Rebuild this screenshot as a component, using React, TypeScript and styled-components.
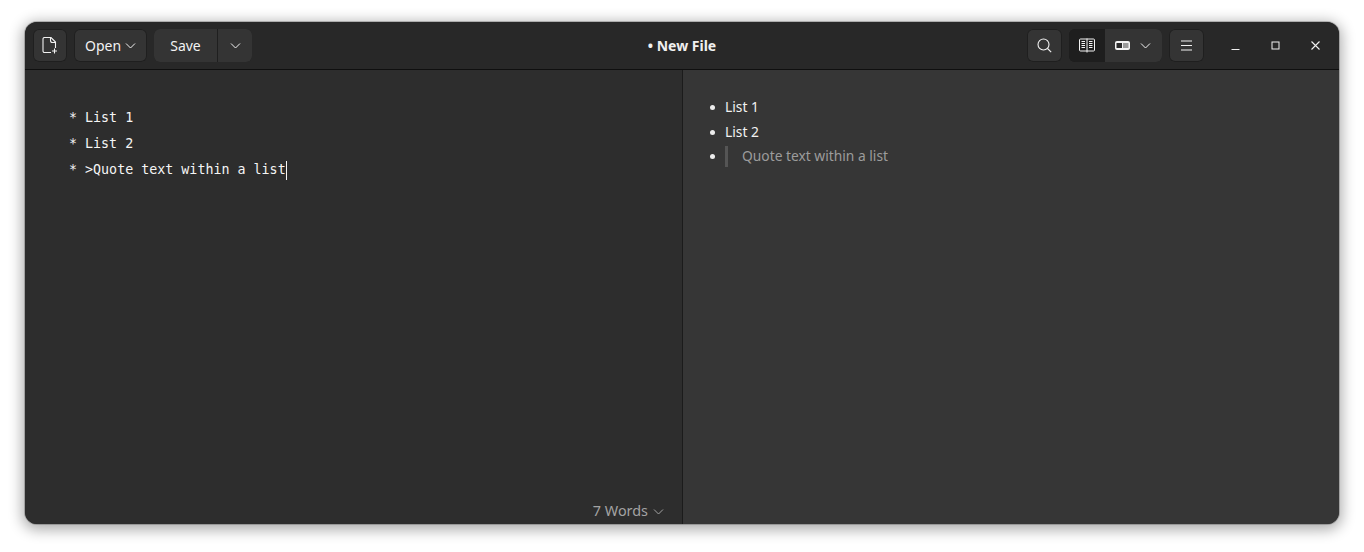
import styled, { createGlobalStyle } from 'styled-components';

const GlobalStyle = createGlobalStyle`
  html, body {
    margin: 0;
    height: 100%;
    background: #fff;
  }
  body {
    padding: 22px 25px 28px;
    box-sizing: border-box;
    overflow: hidden;
    font-family: "Noto Sans", "Open Sans", sans-serif;
  }
`;

const Window = styled.div`
  width: 1314px;
  height: 502px;
  border-radius: 12px;
  overflow: hidden;
  display: flex;
  flex-direction: column;
  background: #2d2d2d;
  box-shadow: 0 3px 14px 3px rgba(0, 0, 0, 0.32), 0 0 0 1px rgba(0, 0, 0, 0.2);
`;

const Header = styled.header`
  height: 48px;
  flex: none;
  box-sizing: border-box;
  padding: 7px 4px 7px 8px;
  display: grid;
  grid-template-columns: 1fr auto 1fr;
  align-items: center;
  background: #282828;
  border-bottom: 1px solid #0f0f0f;
`;

const HeaderSide = styled.div<{ $end?: boolean }>`
  display: flex;
  align-items: center;
  gap: 7px;
  justify-content: ${(p) => (p.$end ? 'flex-end' : 'flex-start')};
`;

const Button = styled.div<{ $width: number; $active?: boolean }>`
  width: ${(p) => p.$width}px;
  height: 33px;
  box-sizing: border-box;
  display: flex;
  align-items: center;
  justify-content: center;
  gap: 4px;
  color: #f2f2f2;
  font-size: 14px;
  border-radius: 6px;
  background: ${(p) => (p.$active ? '#1e1e1e' : '#343434')};
  box-shadow: inset 0 0 0 1px #1f1f1f;
`;

const Group = styled.div`
  display: flex;
  height: 33px;
  border-radius: 6px;
  overflow: hidden;
  box-shadow: inset 0 0 0 1px #1f1f1f;

  ${Button} {
    border-radius: 0;
    box-shadow: none;
  }
  ${Button} + ${Button} {
    border-left: 1px solid #1f1f1f;
  }
`;

const ViewGroup = styled(Group)`
  ${Button} + ${Button} {
    border-left: none;
    gap: 10px;
    padding-right: 2px;
  }
`;

const Title = styled.div`
  color: #f0f0f0;
  font-size: 14px;
  font-weight: 700;
  white-space: nowrap;
  padding-right: 4px;
`;

const WindowControls = styled.div`
  display: flex;
  margin-left: 4px;
`;

const WindowControl = styled.div`
  width: 40px;
  height: 33px;
  display: flex;
  align-items: center;
  justify-content: center;
  color: #f0f0f0;
`;

const Panes = styled.main`
  flex: 1;
  display: flex;
  min-height: 0;
`;

const EditorPane = styled.section`
  width: 658px;
  flex: none;
  box-sizing: border-box;
  display: flex;
  flex-direction: column;
  justify-content: space-between;
  background: #2d2d2d;
  border-right: 1px solid #1b1b1b;
  padding: 35px 18px 3px 44px;
`;

const Code = styled.div`
  color: #f5f5f5;
  font-family: "DejaVu Sans Mono", "Liberation Mono", monospace;
  font-size: 13.33px;
  line-height: 26px;
`;

const CodeLine = styled.div`
  display: flex;
  white-space: pre;
`;

const Caret = styled.span`
  width: 1px;
  height: 19px;
  margin-top: 4px;
  background: #f5f5f5;
`;

const WordCount = styled.div`
  align-self: flex-end;
  display: flex;
  align-items: center;
  gap: 5px;
  color: #a3a3a3;
  font-size: 14.4px;
  line-height: 20px;
`;

const PreviewPane = styled.section`
  flex: 1;
  background: #363636;
  padding: 25px 0 0 42px;
  color: #f2f2f2;
  font-size: 13.8px;
`;

const List = styled.ul`
  margin: 0;
  padding: 0;
  list-style: none;
`;

const Item = styled.li`
  position: relative;
  height: 24.5px;
  line-height: 24px;

  &::before {
    content: '';
    position: absolute;
    left: -15.5px;
    top: 10px;
    width: 5px;
    height: 5px;
    border-radius: 50%;
    background: #ececec;
  }
`;

const QuoteItem = styled(Item)`
  padding-top: 2px;
`;

const Quote = styled.blockquote`
  margin: 0;
  height: 21px;
  line-height: 19px;
  border-left: 3px solid #555;
  padding-left: 14px;
  color: #9c9c9c;
`;

type IconProps = { size?: number };

const Chevron = ({ size = 11 }: IconProps) => (
  <svg width={size} height={size} viewBox="0 0 11 11" fill="none" stroke="currentColor" strokeWidth="1">
    <path d="M1 3.5 5.5 8 10 3.5" />
  </svg>
);

const NewFileIcon = () => (
  <svg width="16" height="17" viewBox="0 0 16 17" fill="none" stroke="currentColor" strokeWidth="1.1">
    <path d="M9 15.500H2.500a1.500 1.500 0 0 1-1.500-1.500V2a1.500 1.500 0 0 1 1.500-1.500h6.500l4.500 4.500v6" />
    <path d="M8.500 0.500v3a2 2 0 0 0 2 2h3" />
    <path d="M12.500 11.500v5M10 14h5" />
  </svg>
);

const SearchIcon = () => (
  <svg width="15" height="15" viewBox="0 0 15 15" fill="none" stroke="currentColor" strokeWidth="1.1">
    <circle cx="6.500" cy="6.500" r="5.500" />
    <path d="m10.500 10.500 3.700 3.700" />
  </svg>
);

const BookIcon = () => (
  <svg width="16" height="15" viewBox="0 0 16 15" fill="none" stroke="currentColor" strokeWidth="1">
    <path d="M1.500 1h13a1 1 0 0 1 1 1v10a1 1 0 0 1-1 1h-13a1 1 0 0 1-1-1V2a1 1 0 0 1 1-1Z" />
    <path d="M8 0.500v14M2.500 3.500h3.500M2.500 5.500h3.500M2.500 7.500h3.500M2.500 9.500h3.500M10 3.500h3.500M10 5.500h3.500M10 7.500h3.500M10 9.500h3.500" />
  </svg>
);

const SplitIcon = () => (
  <svg width="15" height="9" viewBox="0 0 15 9">
    <rect width="15" height="9" rx="2" fill="currentColor" />
    <rect x="1.500" y="2" width="5.500" height="5" fill="#2a2a2a" />
    <rect x="8" y="2" width="5.500" height="5" fill="#9a9a9a" />
  </svg>
);

const MenuIcon = () => (
  <svg width="11" height="11" viewBox="0 0 11 11" fill="none" stroke="currentColor" strokeWidth="1">
    <path d="M0 1h11M0 5.500h11M0 10h11" />
  </svg>
);

const MinimizeIcon = () => (
  <svg width="9" height="9" viewBox="0 0 9 9" fill="none" stroke="currentColor" strokeWidth="1">
    <path d="M0.500 8.500h8" />
  </svg>
);

const MaximizeIcon = () => (
  <svg width="9" height="9" viewBox="0 0 9 9" fill="none" stroke="currentColor" strokeWidth="1">
    <rect x="1" y="1" width="7" height="7" />
  </svg>
);

const CloseIcon = () => (
  <svg width="9" height="9" viewBox="0 0 9 9" fill="none" stroke="currentColor" strokeWidth="1.100">
    <path d="m0.500 0.500 8 8M8.500 0.500l-8 8" />
  </svg>
);

export default function App() {
  return (
    <>
      <GlobalStyle />
      <Window>
        <Header>
          <HeaderSide>
            <Button $width={34}>
              <NewFileIcon />
            </Button>
            <Button $width={73}>
              Open <Chevron />
            </Button>
            <Group>
              <Button $width={63}>Save</Button>
              <Button $width={35}>
                <Chevron />
              </Button>
            </Group>
          </HeaderSide>
          <Title>• New File</Title>
          <HeaderSide $end>
            <Button $width={35}>
              <SearchIcon />
            </Button>
            <ViewGroup>
              <Button $width={36} $active>
                <BookIcon />
              </Button>
              <Button $width={57}>
                <SplitIcon />
                <Chevron />
              </Button>
            </ViewGroup>
            <Button $width={35}>
              <MenuIcon />
            </Button>
            <WindowControls>
              <WindowControl>
                <MinimizeIcon />
              </WindowControl>
              <WindowControl>
                <MaximizeIcon />
              </WindowControl>
              <WindowControl>
                <CloseIcon />
              </WindowControl>
            </WindowControls>
          </HeaderSide>
        </Header>
        <Panes>
          <EditorPane>
            <Code>
              <CodeLine>* List 1</CodeLine>
              <CodeLine>* List 2</CodeLine>
              <CodeLine>
                * &gt;Quote text within a list
                <Caret />
              </CodeLine>
            </Code>
            <WordCount>
              7 Words <Chevron />
            </WordCount>
          </EditorPane>
          <PreviewPane>
            <List>
              <Item>List 1</Item>
              <Item>List 2</Item>
              <QuoteItem>
                <Quote>Quote text within a list</Quote>
              </QuoteItem>
            </List>
          </PreviewPane>
        </Panes>
      </Window>
    </>
  );
}
